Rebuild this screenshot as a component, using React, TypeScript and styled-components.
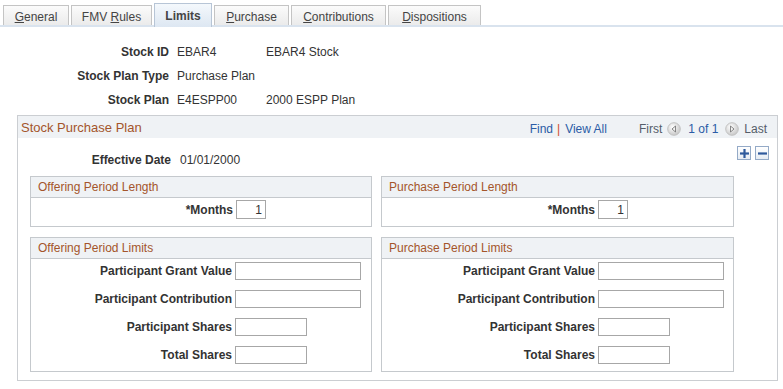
import React from 'react';
import styled, { createGlobalStyle } from 'styled-components';

const GlobalStyle = createGlobalStyle`
  body {
    margin: 0;
    background: #ffffff;
    font-family: 'Liberation Sans', Arial, sans-serif;
    font-size: 12px;
    color: #333333;
  }
`;

interface ITab {
  name: string;
  key?: number;
  width: number;
}

const tabs: ITab[] = [
  { name: 'General', key: 0, width: 66 },
  { name: 'FMV Rules', key: 4, width: 81 },
  { name: 'Limits', width: 58 },
  { name: 'Purchase', key: 0, width: 75 },
  { name: 'Contributions', key: 0, width: 95 },
  { name: 'Dispositions', key: 0, width: 93 },
];

const limitFields = [
  { label: 'Participant Grant Value', long: true },
  { label: 'Participant Contribution', long: true },
  { label: 'Participant Shares', long: false },
  { label: 'Total Shares', long: false },
];

function TabLabel({ tab }: { tab: ITab }) {
  if (tab.key === undefined) return <span>{tab.name}</span>;
  const i = tab.key;
  return (
    <span>
      {tab.name.slice(0, i)}
      <u>{tab.name[i]}</u>
      {tab.name.slice(i + 1)}
    </span>
  );
}

function NavArrow({ dir }: { dir: 'left' | 'right' }) {
  return (
    <svg width="14" height="14" viewBox="0 0 14 14">
      <defs>
        <radialGradient id={`g-${dir}`} cx="40%" cy="35%" r="70%">
          <stop offset="0%" stopColor="#ffffff" />
          <stop offset="100%" stopColor="#c4c4c4" />
        </radialGradient>
      </defs>
      <circle cx="7" cy="7" r="6.3" fill={`url(#g-${dir})`} stroke="#c2c2c2" />
      {dir === 'left' ? (
        <path d="M8.5 4 L5 7 L8.5 10 Z" fill="#f4f4f4" stroke="#6b6b6b" strokeWidth="0.8" />
      ) : (
        <path d="M5.5 4 L9 7 L5.5 10 Z" fill="#f4f4f4" stroke="#6b6b6b" strokeWidth="0.8" />
      )}
    </svg>
  );
}

function App() {
  return (
    <>
      <GlobalStyle />
      <TabBar>
        {tabs.map((tab) => (
          <Tab key={tab.name} active={tab.key === undefined} w={tab.width}>
            <TabLabel tab={tab} />
          </Tab>
        ))}
      </TabBar>

      <KeyGrid>
        <KeyLabel>Stock ID</KeyLabel>
        <KeyValue>EBAR4</KeyValue>
        <KeyValue>EBAR4 Stock</KeyValue>
        <KeyLabel>Stock Plan Type</KeyLabel>
        <KeyValue>Purchase Plan</KeyValue>
        <KeyValue />
        <KeyLabel>Stock Plan</KeyLabel>
        <KeyValue>E4ESPP00</KeyValue>
        <KeyValue>2000 ESPP Plan</KeyValue>
      </KeyGrid>

      <OuterBox>
        <OuterHeader>
          <OuterTitle>Stock Purchase Plan</OuterTitle>
          <Nav>
            <NavLink>Find</NavLink>
            <Sep>|</Sep>
            <NavLink>View All</NavLink>
            <Pager>
              <PagerText>First</PagerText>
              <NavArrow dir="left" />
              <PagerCount>1 of 1</PagerCount>
              <NavArrow dir="right" />
              <PagerText>Last</PagerText>
            </Pager>
          </Nav>
        </OuterHeader>
        <OuterBody>
          <TopRow>
            <EffRow>
              <EffLabel>Effective Date</EffLabel>
              <span>01/01/2000</span>
            </EffRow>
            <RowButtons>
              <RowButton aria-label="Add row">
                <svg width="9" height="9" viewBox="0 0 9 9">
                  <rect x="3.4" y="0" width="2.2" height="9" fill="#2f5a9c" />
                  <rect x="0" y="3.4" width="9" height="2.2" fill="#2f5a9c" />
                </svg>
              </RowButton>
              <RowButton aria-label="Delete row">
                <svg width="9" height="9" viewBox="0 0 9 9">
                  <rect x="0" y="3.4" width="9" height="2.2" fill="#2f5a9c" />
                </svg>
              </RowButton>
            </RowButtons>
          </TopRow>
          <Columns>
            <SubBox>
              <SubHeader>Offering Period Length</SubHeader>
              <FieldGrid labelWidth={202} short>
                <FieldLabel>*Months</FieldLabel>
                <MonthInput defaultValue="1" />
              </FieldGrid>
            </SubBox>
            <SubBox>
              <SubHeader>Purchase Period Length</SubHeader>
              <FieldGrid labelWidth={213} short>
                <FieldLabel>*Months</FieldLabel>
                <MonthInput defaultValue="1" />
              </FieldGrid>
            </SubBox>
            <SubBox>
              <SubHeader>Offering Period Limits</SubHeader>
              <FieldGrid labelWidth={201}>
                {limitFields.map((f) => (
                  <React.Fragment key={f.label}>
                    <FieldLabel>{f.label}</FieldLabel>
                    <TextInput long={f.long} />
                  </React.Fragment>
                ))}
              </FieldGrid>
            </SubBox>
            <SubBox>
              <SubHeader>Purchase Period Limits</SubHeader>
              <FieldGrid labelWidth={213}>
                {limitFields.map((f) => (
                  <React.Fragment key={f.label}>
                    <FieldLabel>{f.label}</FieldLabel>
                    <TextInput long={f.long} />
                  </React.Fragment>
                ))}
              </FieldGrid>
            </SubBox>
          </Columns>
        </OuterBody>
      </OuterBox>
    </>
  );
}

const TabBar = styled.div`
  display: flex;
  align-items: flex-end;
  gap: 2px;
  padding: 3px 0 0 3px;
  height: 22px;
  border-bottom: 2px solid #d9e3ee;
`;

const Tab = styled.div<{ active: boolean; w: number }>`
  box-sizing: border-box;
  width: ${(props) => props.w}px;
  height: ${(props) => (props.active ? 24 : 20)}px;
  margin-bottom: ${(props) => (props.active ? -2 : 0)}px;
  display: flex;
  align-items: center;
  justify-content: center;
  padding-top: ${(props) => (props.active ? 0 : 2)}px;
  border: 1px solid ${(props) => (props.active ? '#b7c5d6' : '#c4c4c4')};
  border-bottom: none;
  background: ${(props) =>
    props.active
      ? 'linear-gradient(#f4f8fc, #dde7f2)'
      : 'linear-gradient(#fbfbfb, #ebebeb)'};
  font-weight: ${(props) => (props.active ? 700 : 400)};
  color: #444444;
  white-space: pre;
`;

const KeyGrid = styled.div`
  display: grid;
  grid-template-columns: 177px 89px auto;
  grid-auto-rows: 24px;
  align-items: center;
  margin-top: 13px;
`;

const KeyLabel = styled.span`
  font-weight: 700;
  text-align: right;
  padding-right: 8px;
`;

const KeyValue = styled.span``;

const OuterBox = styled.div`
  box-sizing: border-box;
  width: 761px;
  margin: 3px 0 0 17px;
  border: 1px solid #cbced2;
`;

const OuterHeader = styled.div`
  height: 22px;
  display: flex;
  align-items: center;
  justify-content: space-between;
  padding: 0 10px 0 3px;
  background: #eff2f5;
`;

const OuterTitle = styled.span`
  font-size: 13px;
  color: #a4552b;
`;

const Nav = styled.div`
  display: flex;
  align-items: center;
  padding-top: 3px;
`;

const NavLink = styled.span`
  color: #2b5ca6;
`;

const Sep = styled.span`
  color: #cf4a2c;
  margin: 0 5px 0 4px;
`;

const Pager = styled.div`
  display: flex;
  align-items: center;
  gap: 5px;
  margin-left: 32px;
`;

const PagerText = styled.span`
  color: #555d69;
`;

const PagerCount = styled.span`
  color: #2b5ca6;
  margin: 0 2px;
`;

const OuterBody = styled.div`
  padding: 9px 8px 8px 12px;
`;

const TopRow = styled.div`
  display: flex;
  justify-content: space-between;
  align-items: flex-start;
  height: 29px;
`;

const EffRow = styled.div`
  display: flex;
  gap: 9px;
  margin-top: 6px;
  line-height: 14px;
`;

const EffLabel = styled.span`
  width: 141px;
  text-align: right;
  font-weight: 700;
`;

const RowButtons = styled.div`
  display: flex;
  gap: 4px;
  margin-top: -1px;
`;

const RowButton = styled.button`
  box-sizing: border-box;
  width: 14px;
  height: 14px;
  padding: 0;
  display: flex;
  align-items: center;
  justify-content: center;
  border: 1px solid #94aac7;
  background: linear-gradient(#ffffff, #e6ecf3);
`;

const Columns = styled.div`
  display: grid;
  grid-template-columns: 342px 353px;
  column-gap: 9px;
  row-gap: 10px;
`;

const SubBox = styled.div`
  border: 1px solid #c5c9cd;
`;

const SubHeader = styled.div`
  height: 20px;
  line-height: 20px;
  padding-left: 7px;
  background: #eff2f5;
  border-bottom: 1px solid #c5c9cd;
  color: #a4552b;
`;

const FieldGrid = styled.div<{ labelWidth: number; short?: boolean }>`
  display: grid;
  grid-template-columns: ${(props) => props.labelWidth}px auto;
  column-gap: 3px;
  row-gap: 10px;
  align-items: center;
  padding: ${(props) => (props.short ? '2px 0 7px' : '3px 0 7px')};
`;

const FieldLabel = styled.span`
  font-weight: 700;
  text-align: right;
`;

const TextInput = styled.input<{ long?: boolean }>`
  box-sizing: border-box;
  width: ${(props) => (props.long ? 126 : 72)}px;
  height: 18px;
  margin: 0;
  border: 1px solid #a7a7a7;
  font: 12px 'Liberation Sans', Arial, sans-serif;
`;

const MonthInput = styled.input`
  box-sizing: border-box;
  width: 30px;
  height: 19px;
  margin: 0;
  padding: 0 3px;
  border: 1px solid #a7a7a7;
  text-align: right;
  color: #333333;
  font: 12px 'Liberation Sans', Arial, sans-serif;
`;

export default App;
